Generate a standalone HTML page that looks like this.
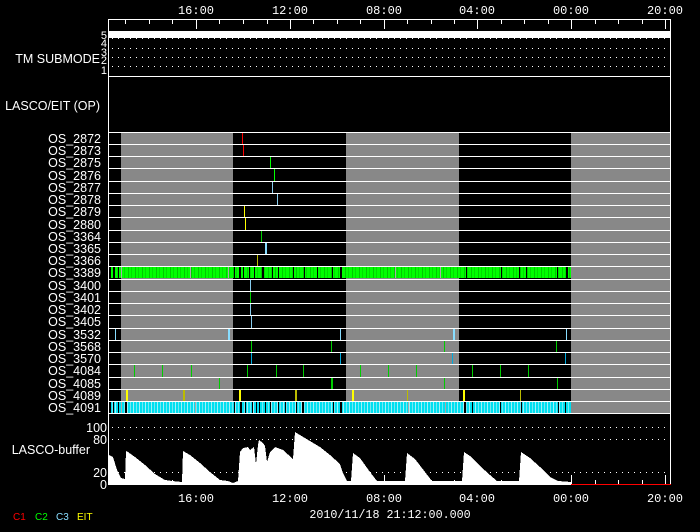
<!DOCTYPE html>
<html><head><meta charset="utf-8"><style>
html,body{margin:0;padding:0;background:#000;}
svg{display:block;font-family:"Liberation Mono",monospace;}
.s{font-family:"Liberation Sans",sans-serif;}
</style></head><body>
<svg width="700" height="532" viewBox="0 0 700 532" xmlns="http://www.w3.org/2000/svg" shape-rendering="crispEdges">
<defs>
<pattern id="gp" x="0" y="0" width="7" height="10" patternUnits="userSpaceOnUse">
<rect width="7" height="10" fill="#00ff00"/><rect x="2" width="1" height="10" fill="#00c800"/><rect x="5" width="1" height="10" fill="#00dd00"/>
</pattern>
<pattern id="cp" x="0" y="0" width="6" height="10" patternUnits="userSpaceOnUse">
<rect width="6" height="10" fill="#00e0f0"/><rect x="1" width="1" height="10" fill="#a0f0f8"/><rect x="4" width="1" height="10" fill="#70e8f4"/>
</pattern>
</defs>
<rect width="700" height="532" fill="#000"/>

<g fill="#fff" font-size="12" text-anchor="middle">
<text x="196" y="14">16:00</text><text x="290" y="14">12:00</text><text x="384" y="14">08:00</text>
<text x="477" y="14">04:00</text><text x="571" y="14">00:00</text><text x="665" y="14">20:00</text>
<text x="196" y="502">16:00</text><text x="290" y="502">12:00</text><text x="384" y="502">08:00</text>
<text x="477" y="502">04:00</text><text x="571" y="502">00:00</text><text x="665" y="502">20:00</text>
<text x="390" y="518" font-size="11.7">2010/11/18 21:12:00.000</text>
</g>

<g fill="#888">
<rect x="121" y="132" width="112" height="281"/>
<rect x="346" y="132" width="113" height="281"/>
<rect x="571" y="132" width="100" height="281"/>
</g>

<rect x="109" y="31" width="562" height="7" fill="#fff"/>
<g stroke="#fff" stroke-dasharray="1 5" stroke-width="1">
<line x1="112" y1="38.5" x2="670" y2="38.5"/><line x1="112" y1="48.5" x2="670" y2="48.5"/>
<line x1="112" y1="57.5" x2="670" y2="57.5"/><line x1="112" y1="66.5" x2="670" y2="66.5"/>
<line x1="112" y1="427.5" x2="670" y2="427.5"/><line x1="112" y1="439.5" x2="670" y2="439.5"/>
<line x1="112" y1="472.5" x2="670" y2="472.5"/>
</g>
<g fill="#fff" font-size="11" text-anchor="end" class="s">
<text x="107" y="39">5</text><text x="107" y="47">4</text><text x="107" y="56">3</text><text x="107" y="64">2</text><text x="107" y="74">1</text>
</g>
<g fill="#fff" font-size="12.5" text-anchor="end" class="s">
<text x="100" y="63">TM SUBMODE</text>
<text x="100" y="110">LASCO/EIT (OP)</text>
<text x="101" y="143">OS_2872</text><text x="101" y="155">OS_2873</text><text x="101" y="167">OS_2875</text>
<text x="101" y="180">OS_2876</text><text x="101" y="192">OS_2877</text><text x="101" y="204">OS_2878</text>
<text x="101" y="216">OS_2879</text><text x="101" y="229">OS_2880</text><text x="101" y="241">OS_3364</text>
<text x="101" y="253">OS_3365</text><text x="101" y="265">OS_3366</text><text x="101" y="277">OS_3389</text>
<text x="101" y="290">OS_3400</text><text x="101" y="302">OS_3401</text><text x="101" y="314">OS_3402</text>
<text x="101" y="326">OS_3405</text><text x="101" y="339">OS_3532</text><text x="101" y="351">OS_3568</text>
<text x="101" y="363">OS_3570</text><text x="101" y="375">OS_4084</text><text x="101" y="388">OS_4085</text>
<text x="101" y="400">OS_4089</text><text x="101" y="412">OS_4091</text>
<text x="90" y="454">LASCO-buffer</text>
<text x="107" y="432">100</text><text x="107" y="444">80</text><text x="107" y="477">20</text><text x="107" y="489">0</text>
</g>

<rect x="111" y="267" width="460" height="11" fill="url(#gp)"/>
<rect x="111" y="402" width="460" height="11" fill="url(#cp)"/>
<g fill="#000">
<rect x="113" y="267" width="2" height="11"/><rect x="118" y="267" width="1" height="11"/>
<rect x="234" y="267" width="1" height="11"/><rect x="239" y="267" width="2" height="11"/><rect x="243" y="267" width="1" height="11"/>
<rect x="249" y="267" width="1" height="11"/><rect x="254" y="267" width="1" height="11"/><rect x="262" y="267" width="2" height="11"/>
<rect x="272" y="267" width="1" height="11"/><rect x="278" y="267" width="1" height="11"/><rect x="293" y="267" width="1" height="11"/>
<rect x="304" y="267" width="1" height="11"/><rect x="317" y="267" width="1" height="11"/><rect x="332" y="267" width="1" height="11"/>
<rect x="340" y="267" width="2" height="11"/><rect x="466" y="267" width="1" height="11"/><rect x="501" y="267" width="1" height="11"/>
<rect x="519" y="267" width="1" height="11"/><rect x="526" y="267" width="1" height="11"/><rect x="557" y="267" width="1" height="11"/>
<rect x="566" y="267" width="2" height="11"/>
<rect x="113" y="402" width="1" height="11"/><rect x="118" y="402" width="1" height="11"/><rect x="125" y="402" width="2" height="11"/>
<rect x="234" y="402" width="1" height="11"/><rect x="240" y="402" width="2" height="11"/><rect x="245" y="402" width="1" height="11"/>
<rect x="252" y="402" width="1" height="11"/><rect x="256" y="402" width="1" height="11"/><rect x="259" y="402" width="1" height="11"/>
<rect x="265" y="402" width="1" height="11"/><rect x="270" y="402" width="1" height="11"/><rect x="278" y="402" width="1" height="11"/>
<rect x="285" y="402" width="1" height="11"/><rect x="296" y="402" width="1" height="11"/><rect x="302" y="402" width="1" height="11"/>
<rect x="303" y="402" width="1" height="11"/><rect x="333" y="402" width="1" height="11"/><rect x="340" y="402" width="2" height="11"/>
<rect x="464" y="402" width="2" height="11"/><rect x="472" y="402" width="1" height="11"/><rect x="500" y="402" width="1" height="11"/>
<rect x="521" y="402" width="1" height="11"/><rect x="558" y="402" width="1" height="11"/><rect x="565" y="402" width="1" height="11"/>
</g>
<g fill="#aaa">
<rect x="121" y="267" width="1" height="11"/><rect x="190" y="267" width="1" height="11"/><rect x="228" y="267" width="1" height="11"/>
<rect x="395" y="267" width="1" height="11"/><rect x="440" y="267" width="1" height="11"/>
<rect x="121" y="402" width="1" height="11"/><rect x="195" y="402" width="1" height="11"/><rect x="408" y="402" width="1" height="11"/><rect x="445" y="402" width="1" height="11"/>
</g>

<g>
<rect x="242" y="132" width="1" height="12" fill="#f00"/><rect x="243" y="144" width="1" height="12" fill="#f00"/>
<rect x="270" y="156" width="1" height="13" fill="#0f0"/><rect x="274" y="169" width="1" height="12" fill="#0f0"/>
<rect x="272" y="181" width="1" height="12" fill="#8ce"/><rect x="277" y="193" width="1" height="12" fill="#8ce"/>
<rect x="244" y="205" width="1" height="13" fill="#ff0"/><rect x="245" y="218" width="1" height="12" fill="#ff0"/>
<rect x="261" y="230" width="1" height="12" fill="#0c0"/><rect x="265" y="242" width="2" height="12" fill="#8df"/>
<rect x="257" y="254" width="1" height="12" fill="#bb0"/>
<rect x="250" y="279" width="1" height="12" fill="#8ce"/><rect x="250" y="291" width="1" height="12" fill="#0c0"/>
<rect x="250" y="303" width="1" height="12" fill="#8ce"/><rect x="251" y="315" width="1" height="13" fill="#8ce"/>
<g fill="#8df"><rect x="115" y="328" width="1" height="12"/><rect x="228" y="328" width="2" height="12"/><rect x="340" y="328" width="1" height="12"/><rect x="453" y="328" width="2" height="12"/><rect x="566" y="328" width="1" height="12"/></g>
<g fill="#0c0"><rect x="251" y="340" width="1" height="12"/><rect x="331" y="340" width="1" height="12"/><rect x="444" y="340" width="1" height="12"/><rect x="556" y="340" width="1" height="12"/></g>
<g fill="#0ad"><rect x="251" y="352" width="1" height="12"/><rect x="340" y="352" width="1" height="12"/><rect x="452" y="352" width="1" height="12"/><rect x="565" y="352" width="1" height="12"/></g>
<g fill="#0c0"><rect x="134" y="364" width="1" height="13"/><rect x="162" y="364" width="1" height="13"/><rect x="191" y="364" width="1" height="13"/><rect x="247" y="364" width="1" height="13"/><rect x="276" y="364" width="1" height="13"/><rect x="303" y="364" width="1" height="13"/><rect x="360" y="364" width="1" height="13"/><rect x="388" y="364" width="1" height="13"/><rect x="416" y="364" width="1" height="13"/><rect x="472" y="364" width="1" height="13"/><rect x="500" y="364" width="1" height="13"/><rect x="528" y="364" width="1" height="13"/></g>
<g fill="#0c0"><rect x="219" y="377" width="1" height="12"/><rect x="331" y="377" width="2" height="12"/><rect x="444" y="377" width="1" height="12"/><rect x="557" y="377" width="1" height="12"/></g>
<g fill="#ff0"><rect x="126" y="389" width="2" height="12"/><rect x="239" y="389" width="2" height="12"/><rect x="352" y="389" width="2" height="12"/><rect x="463" y="389" width="2" height="12"/></g>
<g fill="#bb0"><rect x="183" y="389" width="2" height="12"/><rect x="295" y="389" width="2" height="12"/><rect x="407" y="389" width="1" height="12"/><rect x="520" y="389" width="1" height="12"/></g>
</g>

<g stroke="#fff" stroke-width="1">
<line x1="109" y1="144.5" x2="671" y2="144.5"/><line x1="109" y1="156.5" x2="671" y2="156.5"/><line x1="109" y1="168.5" x2="671" y2="168.5"/>
<line x1="109" y1="181.5" x2="671" y2="181.5"/><line x1="109" y1="193.5" x2="671" y2="193.5"/><line x1="109" y1="205.5" x2="671" y2="205.5"/>
<line x1="109" y1="217.5" x2="671" y2="217.5"/><line x1="109" y1="230.5" x2="671" y2="230.5"/><line x1="109" y1="242.5" x2="671" y2="242.5"/>
<line x1="109" y1="254.5" x2="671" y2="254.5"/><line x1="109" y1="266.5" x2="671" y2="266.5"/><line x1="109" y1="279.5" x2="671" y2="279.5"/>
<line x1="109" y1="291.5" x2="671" y2="291.5"/><line x1="109" y1="303.5" x2="671" y2="303.5"/><line x1="109" y1="315.5" x2="671" y2="315.5"/>
<line x1="109" y1="328.5" x2="671" y2="328.5"/><line x1="109" y1="340.5" x2="671" y2="340.5"/><line x1="109" y1="352.5" x2="671" y2="352.5"/>
<line x1="109" y1="364.5" x2="671" y2="364.5"/><line x1="109" y1="377.5" x2="671" y2="377.5"/><line x1="109" y1="389.5" x2="671" y2="389.5"/>
<line x1="109" y1="401.5" x2="671" y2="401.5"/>
<line x1="109" y1="76.5" x2="671" y2="76.5"/><line x1="109" y1="132.5" x2="671" y2="132.5"/><line x1="109" y1="413.5" x2="671" y2="413.5"/>
<rect x="108.5" y="19.5" width="562" height="465" fill="none"/>
</g>

<polygon fill="#fff" points="109,484 109,455 113,457 117,470 121,478 125,479 126,451 128,452 135,457 145,465 155,474 165,480 172,481 182,482 183,451 190,455 200,463 210,472 220,480 228,481 233,483 238,481 240,452 243,448 248,447 250,450 254,447 256,464 258,445 259,440 263,443 265,446 267,462 270,452 275,447 283,450 293,459 295,432 300,435 310,441 320,447 330,455 340,464 343,473 347,481 351,481 353,453 360,458 370,472 377,481 405,481 407,453 415,459 425,472 432,481 462,481 464,452 470,456 480,466 490,475 497,481 519,481 521,452 530,458 540,467 550,477 558,481 571,482 571,484"/>
<line x1="571" y1="484.5" x2="671" y2="484.5" stroke="#f00"/>

<g stroke="#fff" stroke-width="1">
<path d="M125.5 20v4M149.5 20v4M172.5 20v4M196.5 20v9M219.5 20v4M243.5 20v4M267.5 20v4M290.5 20v9M313.5 20v4M337.5 20v4M360.5 20v4M384.5 20v9M407.5 20v4M431.5 20v4M454.5 20v4M477.5 20v9M501.5 20v4M524.5 20v4M548.5 20v4M571.5 20v9M595.5 20v4M618.5 20v4M642.5 20v4M665.5 20v9"/>
<path d="M125.5 484v-4M149.5 484v-4M172.5 484v-4M196.5 484v-9M219.5 484v-4M243.5 484v-4M267.5 484v-4M290.5 484v-9M313.5 484v-4M337.5 484v-4M360.5 484v-4M384.5 484v-9M407.5 484v-4M431.5 484v-4M454.5 484v-4M477.5 484v-9M501.5 484v-4M524.5 484v-4M548.5 484v-4M571.5 484v-9M595.5 484v-4M618.5 484v-4M642.5 484v-4M665.5 484v-9"/>
</g>

<g font-size="10" class="s">
<text x="13" y="520" fill="#f00">C1</text><text x="35" y="520" fill="#0f0">C2</text>
<text x="56" y="520" fill="#8df">C3</text><text x="77" y="520" fill="#ff0">EIT</text>
</g>
</svg>
</body></html>
